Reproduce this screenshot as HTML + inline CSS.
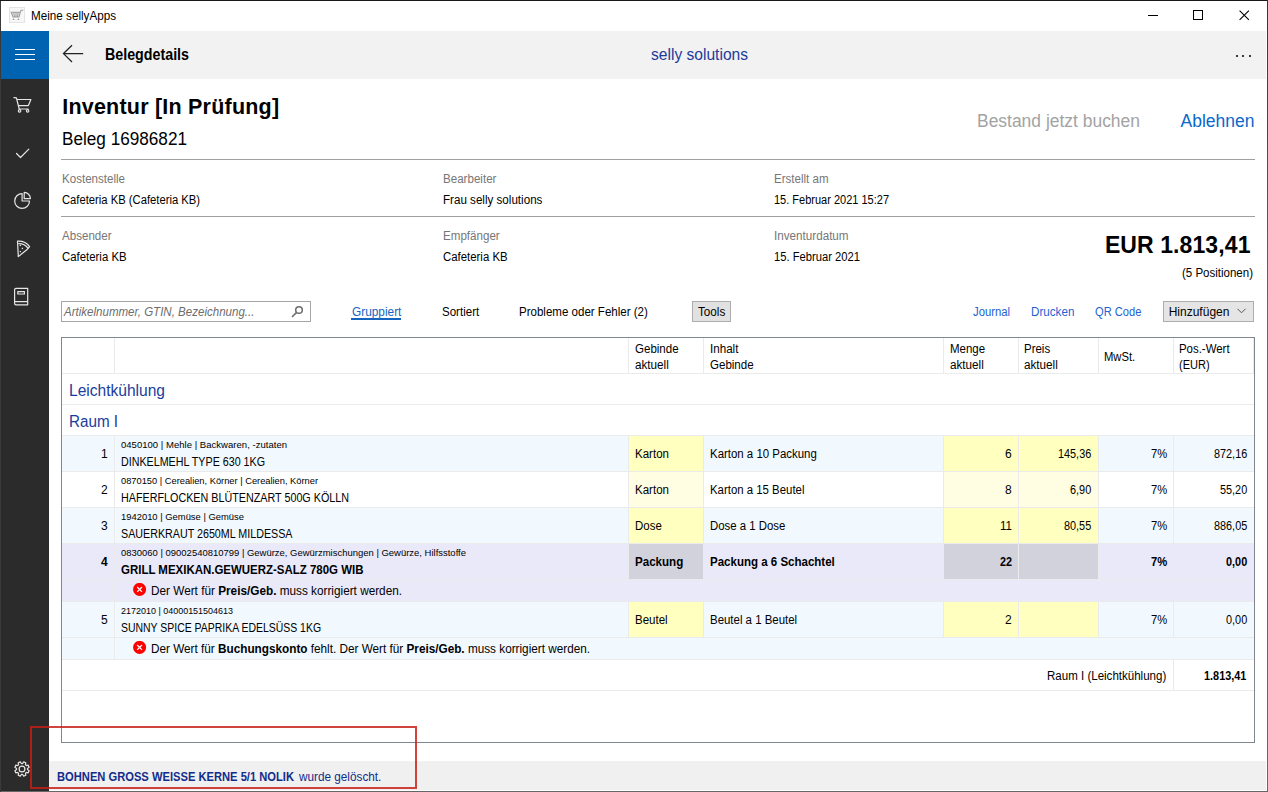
<!DOCTYPE html>
<html><head><meta charset="utf-8"><style>
html,body{margin:0;padding:0;width:1268px;height:792px;overflow:hidden;background:#fff}
body{position:relative;font-family:"Liberation Sans",sans-serif}
body>*{position:absolute}
.t{white-space:pre}
</style></head><body>
<div style="left:0px;top:0px;width:1268px;height:792px;background:#ffffff;"></div>
<span class="t" style="top:9px;font-size:12px;line-height:14px;color:#000;transform:scaleX(0.9730);transform-origin:0 0;left:30.50px;">Meine sellyApps</span>
<svg style="left:9px;top:7px" width="16" height="16" viewBox="0 0 16 16"><rect x="0.5" y="0.5" width="15" height="15" fill="#f7f7f7" stroke="#e4e4e4"/><path d="M2.3 5.2 L4 10 L10 10 L11.3 5.2 Z M4.6 5.2 L5.6 10 M7 5.2 L7 10 M9.2 5.2 L8.5 10 M11.3 5.2 L12.1 3.2 L14.2 3.2" fill="none" stroke="#9d9d9d" stroke-width="1.1"/><path d="M3.3 13 L4.5 11.3 L5.7 13 Z M8.2 13 L9.4 11.3 L10.6 13 Z" fill="#9d9d9d"/></svg>
<div style="left:1148px;top:15px;width:10px;height:1px;background:#000;"></div>
<div style="left:1193px;top:10px;width:8px;height:8px;border:1px solid #000"></div>
<svg style="left:1239px;top:10px" width="11" height="11" viewBox="0 0 11 11"><path d="M0.6 0.6 L9.9 9.9 M9.9 0.6 L0.6 9.9" stroke="#000" stroke-width="1.1"/></svg>
<div style="left:1px;top:31px;width:48px;height:760px;background:#2b2b2b;"></div>
<div style="left:1px;top:31px;width:48px;height:48px;background:#0063b1;"></div>
<div style="left:15px;top:49px;width:20px;height:1px;background:#fff;"></div>
<div style="left:15px;top:54px;width:20px;height:1px;background:#fff;"></div>
<div style="left:15px;top:59px;width:20px;height:1px;background:#fff;"></div>
<svg style="left:12px;top:95px" width="22" height="20" viewBox="0 0 22 20"><path d="M1.9 2.6 L4.4 2.8 L7.2 14 L16.2 14 M5.2 4.5 L18.9 4.5 L16.4 10.6 L6.6 10.6" fill="none" stroke="#e6e6e6" stroke-width="1.2" stroke-linejoin="round" stroke-linecap="round"/><circle cx="7.6" cy="15.9" r="1.2" fill="none" stroke="#e6e6e6" stroke-width="1.2" stroke-linejoin="round" stroke-linecap="round"/><circle cx="15.6" cy="15.9" r="1.2" fill="none" stroke="#e6e6e6" stroke-width="1.2" stroke-linejoin="round" stroke-linecap="round"/></svg>
<svg style="left:14px;top:145.5px" width="18" height="14" viewBox="0 0 18 14"><path d="M2.5 7.5 L6.5 11.5 L14.8 3.2" fill="none" stroke="#e6e6e6" stroke-width="1.2" stroke-linejoin="round" stroke-linecap="round"/></svg>
<svg style="left:12px;top:190px" width="22" height="22" viewBox="0 0 22 22"><path d="M10.1 3.6 A7.4 7.4 0 1 0 17.5 11 L10.1 11 Z" fill="none" stroke="#e6e6e6" stroke-width="1.2" stroke-linejoin="round" stroke-linecap="round"/><path d="M12.2 2.4 A6.2 6.2 0 0 1 18.4 8.6 L12.2 8.6 Z" fill="none" stroke="#e6e6e6" stroke-width="1.2" stroke-linejoin="round" stroke-linecap="round"/></svg>
<svg style="left:14px;top:238px" width="18" height="22" viewBox="0 0 18 22"><path d="M3.5 3.2 Q11.5 2.8 15.6 8.6 L12.8 11.8 L4.3 18.6 Z" fill="none" stroke="#e6e6e6" stroke-width="1.2" stroke-linejoin="round" stroke-linecap="round"/><path d="M4.8 5.6 Q10.8 5.6 14 10.2" fill="none" stroke="#e6e6e6" stroke-width="1.2" stroke-linejoin="round" stroke-linecap="round"/><path d="M6.3 6.5 L7.2 7.4 L6.3 8.3 L5.4 7.4 Z M8.4 9.5 L9.3 10.4 L8.4 11.3 L7.5 10.4 Z M6.3 12.7 L7.2 13.6 L6.3 14.5 L5.4 13.6 Z" fill="#e6e6e6"/></svg>
<svg style="left:12px;top:285px" width="18" height="22" viewBox="0 0 18 22"><path d="M4 3.4 L15.7 3.4 L15.7 19.8 L4 19.8 Q2.6 19.8 2.6 18.4 L2.6 4.8 Q2.6 3.4 4 3.4 Z M2.6 16.6 L15.7 16.6 M5.8 6.6 L12.4 6.6 L12.4 9 L5.8 9 Z" fill="none" stroke="#e6e6e6" stroke-width="1.2" stroke-linejoin="round" stroke-linecap="round"/></svg>
<svg style="left:12.4px;top:758.5px" width="20" height="20" viewBox="0 0 20 20"><path d="M10.62 4.54 L11.70 2.90 L13.81 3.78 L13.42 5.70 L14.30 6.58 L16.22 6.19 L17.10 8.30 L15.46 9.38 L15.46 10.62 L17.10 11.70 L16.22 13.81 L14.30 13.42 L13.42 14.30 L13.81 16.22 L11.70 17.10 L10.62 15.46 L9.38 15.46 L8.30 17.10 L6.19 16.22 L6.58 14.30 L5.70 13.42 L3.78 13.81 L2.90 11.70 L4.54 10.62 L4.54 9.38 L2.90 8.30 L3.78 6.19 L5.70 6.58 L6.58 5.70 L6.19 3.78 L8.30 2.90 L9.38 4.54 Z" fill="none" stroke="#e6e6e6" stroke-width="1.2" stroke-linejoin="round" stroke-linecap="round"/><circle cx="10" cy="10" r="2.9" fill="none" stroke="#e6e6e6" stroke-width="1.2" stroke-linejoin="round" stroke-linecap="round"/></svg>
<div style="left:49px;top:31px;width:1217px;height:48px;background:#f2f2f2;"></div>
<svg style="left:62px;top:44px" width="24" height="20" viewBox="0 0 24 20"><path d="M1.5 9.6 L21.2 9.6 M10 1.2 L1.5 9.6 L10 18" fill="none" stroke="#222" stroke-width="1.3"/></svg>
<span class="t" style="top:46px;font-size:16px;line-height:17px;color:#000;font-weight:bold;transform:scaleX(0.8913);transform-origin:0 0;left:105.00px;">Belegdetails</span>
<span class="t" style="top:46px;font-size:16px;line-height:17px;color:#1c3a9a;transform:scaleX(0.9739);transform-origin:0 0;left:651.40px;">selly solutions</span>
<div style="left:1236px;top:55px;width:2px;height:2px;background:#000;border-radius:1px;"></div>
<div style="left:1242px;top:55px;width:2px;height:2px;background:#000;border-radius:1px;"></div>
<div style="left:1249px;top:55px;width:2px;height:2px;background:#000;border-radius:1px;"></div>
<span class="t" style="top:95px;font-size:21.5px;line-height:24px;color:#000;font-weight:bold;letter-spacing:0.218px;left:62.20px;">Inventur [In Prüfung]</span>
<span class="t" style="top:129px;font-size:17.5px;line-height:20px;color:#000;transform:scaleX(0.9805);transform-origin:0 0;left:62.20px;">Beleg 16986821</span>
<span class="t" style="top:111px;font-size:17.5px;line-height:20px;color:#a3a3a3;transform:scaleX(0.9972);transform-origin:0 0;left:976.50px;">Bestand jetzt buchen</span>
<span class="t" style="top:111px;font-size:17.5px;line-height:20px;color:#0a68cc;letter-spacing:0.009px;left:1180.50px;">Ablehnen</span>
<div style="left:61px;top:159px;width:1194px;height:1px;background:#a0a0a0;"></div>
<span class="t" style="top:172px;font-size:12px;line-height:14px;color:#767676;transform:scaleX(0.9633);transform-origin:0 0;left:61.50px;">Kostenstelle</span>
<span class="t" style="top:172px;font-size:12px;line-height:14px;color:#767676;transform:scaleX(0.9656);transform-origin:0 0;left:442.60px;">Bearbeiter</span>
<span class="t" style="top:172px;font-size:12px;line-height:14px;color:#767676;transform:scaleX(0.9632);transform-origin:0 0;left:774.20px;">Erstellt am</span>
<span class="t" style="top:193px;font-size:12px;line-height:14px;color:#000;transform:scaleX(0.9361);transform-origin:0 0;left:61.50px;">Cafeteria KB (Cafeteria KB)</span>
<span class="t" style="top:193px;font-size:12px;line-height:14px;color:#000;transform:scaleX(0.9677);transform-origin:0 0;left:442.60px;">Frau selly solutions</span>
<span class="t" style="top:193px;font-size:12px;line-height:14px;color:#000;transform:scaleX(0.9171);transform-origin:0 0;left:774.20px;">15. Februar 2021 15:27</span>
<div style="left:61px;top:216px;width:1194px;height:1px;background:#a0a0a0;"></div>
<span class="t" style="top:229px;font-size:12px;line-height:14px;color:#767676;transform:scaleX(0.9649);transform-origin:0 0;left:61.50px;">Absender</span>
<span class="t" style="top:229px;font-size:12px;line-height:14px;color:#767676;transform:scaleX(0.9661);transform-origin:0 0;left:442.60px;">Empfänger</span>
<span class="t" style="top:229px;font-size:12px;line-height:14px;color:#767676;transform:scaleX(0.9722);transform-origin:0 0;left:774.20px;">Inventurdatum</span>
<span class="t" style="top:250px;font-size:12px;line-height:14px;color:#000;transform:scaleX(0.9492);transform-origin:0 0;left:61.50px;">Cafeteria KB</span>
<span class="t" style="top:250px;font-size:12px;line-height:14px;color:#000;transform:scaleX(0.9492);transform-origin:0 0;left:442.60px;">Cafeteria KB</span>
<span class="t" style="top:250px;font-size:12px;line-height:14px;color:#000;transform:scaleX(0.9330);transform-origin:0 0;left:774.20px;">15. Februar 2021</span>
<span class="t" style="top:232px;font-size:23px;line-height:26px;color:#000;font-weight:bold;letter-spacing:0.096px;left:1104.90px;">EUR 1.813,41</span>
<span class="t" style="top:266px;font-size:12px;line-height:14px;color:#000;transform:scaleX(0.9589);transform-origin:0 0;left:1182.30px;">(5 Positionen)</span>
<div style="left:61px;top:301px;width:248px;height:19px;border:1px solid #a6a6a6;background:#fff"></div>
<span class="t" style="top:305px;font-size:12px;line-height:14px;color:#6d6d6d;font-style:italic;transform:scaleX(0.9614);transform-origin:0 0;left:64.18px;">Artikelnummer, GTIN, Bezeichnung...</span>
<svg style="left:290px;top:304px" width="14" height="16" viewBox="0 0 14 16"><circle cx="9" cy="6" r="3.3" fill="none" stroke="#6d6d6d" stroke-width="1.5"/><path d="M6.6 8.4 L2 13" stroke="#6d6d6d" stroke-width="1.6"/></svg>
<span class="t" style="top:305px;font-size:12px;line-height:14px;color:#1565c0;transform:scaleX(0.9872);transform-origin:0 0;left:351.60px;">Gruppiert</span>
<div style="left:351px;top:318px;width:50px;height:2px;background:#1565c0;"></div>
<span class="t" style="top:305px;font-size:12px;line-height:14px;color:#000;transform:scaleX(0.9612);transform-origin:0 0;left:441.60px;">Sortiert</span>
<span class="t" style="top:305px;font-size:12px;line-height:14px;color:#000;transform:scaleX(0.9609);transform-origin:0 0;left:519.40px;">Probleme oder Fehler (2)</span>
<div style="left:692px;top:301px;width:37px;height:19px;border:1px solid #adadad;background:#e1e1e1"></div>
<span class="t" style="top:305px;font-size:12px;line-height:14px;color:#000;transform:scaleX(0.9743);transform-origin:0 0;left:697.70px;">Tools</span>
<span class="t" style="top:305px;font-size:12px;line-height:14px;color:#1f63d0;transform:scaleX(0.9426);transform-origin:0 0;left:973.40px;">Journal</span>
<span class="t" style="top:305px;font-size:12px;line-height:14px;color:#1f63d0;transform:scaleX(0.9709);transform-origin:0 0;left:1031.20px;">Drucken</span>
<span class="t" style="top:305px;font-size:12px;line-height:14px;color:#1f63d0;transform:scaleX(0.9273);transform-origin:0 0;left:1095.30px;">QR Code</span>
<div style="left:1163px;top:301px;width:89px;height:19px;border:1px solid #adadad;background:#e5e5e5"></div>
<span class="t" style="top:305px;font-size:12px;line-height:14px;color:#000;left:1168.70px;">Hinzufügen</span>
<svg style="left:1236px;top:307px" width="12" height="8" viewBox="0 0 12 8"><path d="M1.5 1.8 L5.5 5.8 L9.5 1.8" fill="none" stroke="#555" stroke-width="1"/></svg>
<div style="left:61px;top:337px;width:1192px;height:404px;border:1px solid #7f8591;background:#fff"></div>
<div style="left:114px;top:338px;width:1px;height:35px;background:#ebebeb;"></div>
<div style="left:628px;top:338px;width:1px;height:35px;background:#ebebeb;"></div>
<div style="left:703px;top:338px;width:1px;height:35px;background:#ebebeb;"></div>
<div style="left:943px;top:338px;width:1px;height:35px;background:#ebebeb;"></div>
<div style="left:1018px;top:338px;width:1px;height:35px;background:#ebebeb;"></div>
<div style="left:1098px;top:338px;width:1px;height:35px;background:#ebebeb;"></div>
<div style="left:1173px;top:338px;width:1px;height:35px;background:#ebebeb;"></div>
<div style="left:1253px;top:338px;width:1px;height:35px;background:#ebebeb;"></div>
<div style="left:62px;top:373px;width:1192px;height:1px;background:#ebebeb;"></div>
<span class="t" style="top:342px;font-size:12px;line-height:14px;color:#000;transform:scaleX(0.9616);transform-origin:0 0;left:634.50px;">Gebinde</span>
<span class="t" style="top:358px;font-size:12px;line-height:14px;color:#000;transform:scaleX(0.9750);transform-origin:0 0;left:634.50px;">aktuell</span>
<span class="t" style="top:342px;font-size:12px;line-height:14px;color:#000;transform:scaleX(0.9676);transform-origin:0 0;left:709.60px;">Inhalt</span>
<span class="t" style="top:358px;font-size:12px;line-height:14px;color:#000;transform:scaleX(0.9616);transform-origin:0 0;left:709.60px;">Gebinde</span>
<span class="t" style="top:342px;font-size:12px;line-height:14px;color:#000;transform:scaleX(0.9573);transform-origin:0 0;left:949.80px;">Menge</span>
<span class="t" style="top:358px;font-size:12px;line-height:14px;color:#000;transform:scaleX(0.9750);transform-origin:0 0;left:949.80px;">aktuell</span>
<span class="t" style="top:342px;font-size:12px;line-height:14px;color:#000;transform:scaleX(0.9560);transform-origin:0 0;left:1024.00px;">Preis</span>
<span class="t" style="top:358px;font-size:12px;line-height:14px;color:#000;transform:scaleX(0.9750);transform-origin:0 0;left:1024.00px;">aktuell</span>
<span class="t" style="top:342px;font-size:12px;line-height:14px;color:#000;transform:scaleX(0.9519);transform-origin:0 0;left:1179.00px;">Pos.-Wert</span>
<span class="t" style="top:358px;font-size:12px;line-height:14px;color:#000;transform:scaleX(0.9196);transform-origin:0 0;left:1179.00px;">(EUR)</span>
<span class="t" style="top:350px;font-size:12px;line-height:14px;color:#000;transform:scaleX(0.9374);transform-origin:0 0;left:1104.00px;">MwSt.</span>
<span class="t" style="top:382px;font-size:16px;line-height:17px;color:#1a3c9c;transform:scaleX(0.9724);transform-origin:0 0;left:69.20px;">Leichtkühlung</span>
<div style="left:62px;top:404px;width:1192px;height:1px;background:#ebebeb;"></div>
<span class="t" style="top:413px;font-size:16px;line-height:17px;color:#1a3c9c;transform:scaleX(0.9510);transform-origin:0 0;left:69.20px;">Raum I</span>
<div style="left:62px;top:435px;width:1192px;height:1px;background:#ebebeb;"></div>
<div style="left:62px;top:436px;width:1192px;height:35px;background:#f1f8fe;"></div>
<div style="left:629px;top:436px;width:74px;height:35px;background:#ffffc0;"></div>
<div style="left:944px;top:436px;width:74px;height:35px;background:#ffffc0;"></div>
<div style="left:1019px;top:436px;width:79px;height:35px;background:#ffffc0;"></div>
<div style="left:114px;top:436px;width:1px;height:35px;background:#ebebeb;"></div>
<div style="left:628px;top:436px;width:1px;height:35px;background:#ebebeb;"></div>
<div style="left:703px;top:436px;width:1px;height:35px;background:#ebebeb;"></div>
<div style="left:943px;top:436px;width:1px;height:35px;background:#ebebeb;"></div>
<div style="left:1018px;top:436px;width:1px;height:35px;background:#ebebeb;"></div>
<div style="left:1098px;top:436px;width:1px;height:35px;background:#ebebeb;"></div>
<div style="left:1173px;top:436px;width:1px;height:35px;background:#ebebeb;"></div>
<div style="left:62px;top:471px;width:1192px;height:1px;background:#ebebeb;"></div>
<span class="t" style="top:447px;font-size:12px;line-height:14px;color:#000;left:100.94px;">1</span>
<span class="t" style="top:439px;font-size:9.5px;line-height:11px;color:#000;letter-spacing:0.029px;left:121.00px;">0450100 | Mehle | Backwaren, -zutaten</span>
<span class="t" style="top:455px;font-size:12px;line-height:14px;color:#000;transform:scaleX(0.8922);transform-origin:0 0;left:121.00px;">DINKELMEHL TYPE 630 1KG</span>
<span class="t" style="top:447px;font-size:12px;line-height:14px;color:#000;transform:scaleX(0.9603);transform-origin:0 0;left:634.80px;">Karton</span>
<span class="t" style="top:447px;font-size:12px;line-height:14px;color:#000;transform:scaleX(0.9528);transform-origin:0 0;left:710.20px;">Karton a 10 Packung</span>
<span class="t" style="top:447px;font-size:12px;line-height:14px;color:#000;left:1005.04px;">6</span>
<span class="t" style="top:447px;font-size:12px;line-height:14px;color:#000;transform:scaleX(0.9045);transform-origin:0 0;left:1058.39px;">145,36</span>
<span class="t" style="top:447px;font-size:12px;line-height:14px;color:#000;transform:scaleX(0.9308);transform-origin:0 0;left:1150.86px;">7%</span>
<span class="t" style="top:447px;font-size:12px;line-height:14px;color:#000;transform:scaleX(0.9045);transform-origin:0 0;left:1213.79px;">872,16</span>
<div style="left:62px;top:472px;width:1192px;height:35px;background:#ffffff;"></div>
<div style="left:629px;top:472px;width:74px;height:35px;background:#fffde2;"></div>
<div style="left:944px;top:472px;width:74px;height:35px;background:#fffde2;"></div>
<div style="left:1019px;top:472px;width:79px;height:35px;background:#fffde2;"></div>
<div style="left:114px;top:472px;width:1px;height:35px;background:#ebebeb;"></div>
<div style="left:628px;top:472px;width:1px;height:35px;background:#ebebeb;"></div>
<div style="left:703px;top:472px;width:1px;height:35px;background:#ebebeb;"></div>
<div style="left:943px;top:472px;width:1px;height:35px;background:#ebebeb;"></div>
<div style="left:1018px;top:472px;width:1px;height:35px;background:#ebebeb;"></div>
<div style="left:1098px;top:472px;width:1px;height:35px;background:#ebebeb;"></div>
<div style="left:1173px;top:472px;width:1px;height:35px;background:#ebebeb;"></div>
<div style="left:62px;top:507px;width:1192px;height:1px;background:#ebebeb;"></div>
<span class="t" style="top:483px;font-size:12px;line-height:14px;color:#000;left:100.94px;">2</span>
<span class="t" style="top:475px;font-size:9.5px;line-height:11px;color:#000;transform:scaleX(0.9782);transform-origin:0 0;left:121.00px;">0870150 | Cerealien, Körner | Cerealien, Körner</span>
<span class="t" style="top:491px;font-size:12px;line-height:14px;color:#000;transform:scaleX(0.8966);transform-origin:0 0;left:121.00px;">HAFERFLOCKEN BLÜTENZART 500G KÖLLN</span>
<span class="t" style="top:483px;font-size:12px;line-height:14px;color:#000;transform:scaleX(0.9603);transform-origin:0 0;left:634.80px;">Karton</span>
<span class="t" style="top:483px;font-size:12px;line-height:14px;color:#000;transform:scaleX(0.9499);transform-origin:0 0;left:710.20px;">Karton a 15 Beutel</span>
<span class="t" style="top:483px;font-size:12px;line-height:14px;color:#000;left:1005.04px;">8</span>
<span class="t" style="top:483px;font-size:12px;line-height:14px;color:#000;transform:scaleX(0.9071);transform-origin:0 0;left:1070.43px;">6,90</span>
<span class="t" style="top:483px;font-size:12px;line-height:14px;color:#000;transform:scaleX(0.9308);transform-origin:0 0;left:1150.86px;">7%</span>
<span class="t" style="top:483px;font-size:12px;line-height:14px;color:#000;transform:scaleX(0.9056);transform-origin:0 0;left:1219.78px;">55,20</span>
<div style="left:62px;top:508px;width:1192px;height:35px;background:#f1f8fe;"></div>
<div style="left:629px;top:508px;width:74px;height:35px;background:#ffffc0;"></div>
<div style="left:944px;top:508px;width:74px;height:35px;background:#ffffc0;"></div>
<div style="left:1019px;top:508px;width:79px;height:35px;background:#ffffc0;"></div>
<div style="left:114px;top:508px;width:1px;height:35px;background:#ebebeb;"></div>
<div style="left:628px;top:508px;width:1px;height:35px;background:#ebebeb;"></div>
<div style="left:703px;top:508px;width:1px;height:35px;background:#ebebeb;"></div>
<div style="left:943px;top:508px;width:1px;height:35px;background:#ebebeb;"></div>
<div style="left:1018px;top:508px;width:1px;height:35px;background:#ebebeb;"></div>
<div style="left:1098px;top:508px;width:1px;height:35px;background:#ebebeb;"></div>
<div style="left:1173px;top:508px;width:1px;height:35px;background:#ebebeb;"></div>
<div style="left:62px;top:543px;width:1192px;height:1px;background:#ebebeb;"></div>
<span class="t" style="top:519px;font-size:12px;line-height:14px;color:#000;left:100.94px;">3</span>
<span class="t" style="top:511px;font-size:9.5px;line-height:11px;color:#000;transform:scaleX(0.9895);transform-origin:0 0;left:121.00px;">1942010 | Gemüse | Gemüse</span>
<span class="t" style="top:527px;font-size:12px;line-height:14px;color:#000;transform:scaleX(0.8927);transform-origin:0 0;left:121.00px;">SAUERKRAUT 2650ML MILDESSA</span>
<span class="t" style="top:519px;font-size:12px;line-height:14px;color:#000;transform:scaleX(0.9549);transform-origin:0 0;left:634.80px;">Dose</span>
<span class="t" style="top:519px;font-size:12px;line-height:14px;color:#000;transform:scaleX(0.9488);transform-origin:0 0;left:710.20px;">Dose a 1 Dose</span>
<span class="t" style="top:519px;font-size:12px;line-height:14px;color:#000;transform:scaleX(0.9643);transform-origin:0 0;left:999.66px;">11</span>
<span class="t" style="top:519px;font-size:12px;line-height:14px;color:#000;transform:scaleX(0.9056);transform-origin:0 0;left:1064.38px;">80,55</span>
<span class="t" style="top:519px;font-size:12px;line-height:14px;color:#000;transform:scaleX(0.9308);transform-origin:0 0;left:1150.86px;">7%</span>
<span class="t" style="top:519px;font-size:12px;line-height:14px;color:#000;transform:scaleX(0.9045);transform-origin:0 0;left:1213.79px;">886,05</span>
<div style="left:62px;top:544px;width:1192px;height:35px;background:#e9e9fa;"></div>
<div style="left:629px;top:544px;width:74px;height:35px;background:#d2d2dc;"></div>
<div style="left:944px;top:544px;width:74px;height:35px;background:#d2d2dc;"></div>
<div style="left:1019px;top:544px;width:79px;height:35px;background:#d2d2dc;"></div>
<div style="left:114px;top:544px;width:1px;height:35px;background:#ebebeb;"></div>
<div style="left:628px;top:544px;width:1px;height:35px;background:#ebebeb;"></div>
<div style="left:703px;top:544px;width:1px;height:35px;background:#ebebeb;"></div>
<div style="left:943px;top:544px;width:1px;height:35px;background:#ebebeb;"></div>
<div style="left:1018px;top:544px;width:1px;height:35px;background:#ebebeb;"></div>
<div style="left:1098px;top:544px;width:1px;height:35px;background:#ebebeb;"></div>
<div style="left:1173px;top:544px;width:1px;height:35px;background:#ebebeb;"></div>
<div style="left:62px;top:579px;width:1192px;height:1px;background:#ebebeb;"></div>
<span class="t" style="top:555px;font-size:12px;line-height:14px;color:#000;font-weight:bold;left:100.94px;">4</span>
<span class="t" style="top:547px;font-size:9.5px;line-height:11px;color:#000;transform:scaleX(0.9963);transform-origin:0 0;left:121.00px;">0830060 | 09002540810799 | Gewürze, Gewürzmischungen | Gewürze, Hilfsstoffe</span>
<span class="t" style="top:563px;font-size:12px;line-height:14px;color:#000;font-weight:bold;transform:scaleX(0.9555);transform-origin:0 0;left:121.00px;">GRILL MEXIKAN.GEWUERZ-SALZ 780G WIB</span>
<span class="t" style="top:555px;font-size:12px;line-height:14px;color:#000;font-weight:bold;transform:scaleX(0.9646);transform-origin:0 0;left:634.80px;">Packung</span>
<span class="t" style="top:555px;font-size:12px;line-height:14px;color:#000;font-weight:bold;transform:scaleX(0.9597);transform-origin:0 0;left:710.20px;">Packung a 6 Schachtel</span>
<span class="t" style="top:555px;font-size:12px;line-height:14px;color:#000;font-weight:bold;transform:scaleX(0.9000);transform-origin:0 0;left:999.71px;">22</span>
<span class="t" style="top:555px;font-size:12px;line-height:14px;color:#000;font-weight:bold;transform:scaleX(0.9308);transform-origin:0 0;left:1150.86px;">7%</span>
<span class="t" style="top:555px;font-size:12px;line-height:14px;color:#000;font-weight:bold;transform:scaleX(0.9071);transform-origin:0 0;left:1225.83px;">0,00</span>
<div style="left:62px;top:580px;width:1192px;height:21px;background:#e9e9fa;"></div>
<div style="left:114px;top:580px;width:1px;height:21px;background:#ebebeb;"></div>
<div style="left:62px;top:601px;width:1192px;height:1px;background:#ebebeb;"></div>
<svg style="left:133px;top:583px" width="14" height="14" viewBox="0 0 14 14"><circle cx="6.6" cy="6.4" r="6.5" fill="#f00"/><path d="M4.2 4 L9 8.8 M9 4 L4.2 8.8" stroke="#fff" stroke-width="1.2"/></svg>
<span class="t" style="left:150.90px;top:584px;font-size:12px;line-height:14px;color:#000;transform:scaleX(0.9810);transform-origin:0 0"><span>Der Wert für </span><span style="font-weight:bold">Preis/Geb.</span><span> muss korrigiert werden.</span></span>
<div style="left:62px;top:602px;width:1192px;height:35px;background:#f1f8fe;"></div>
<div style="left:629px;top:602px;width:74px;height:35px;background:#ffffc0;"></div>
<div style="left:944px;top:602px;width:74px;height:35px;background:#ffffc0;"></div>
<div style="left:1019px;top:602px;width:79px;height:35px;background:#ffffc0;"></div>
<div style="left:114px;top:602px;width:1px;height:35px;background:#ebebeb;"></div>
<div style="left:628px;top:602px;width:1px;height:35px;background:#ebebeb;"></div>
<div style="left:703px;top:602px;width:1px;height:35px;background:#ebebeb;"></div>
<div style="left:943px;top:602px;width:1px;height:35px;background:#ebebeb;"></div>
<div style="left:1018px;top:602px;width:1px;height:35px;background:#ebebeb;"></div>
<div style="left:1098px;top:602px;width:1px;height:35px;background:#ebebeb;"></div>
<div style="left:1173px;top:602px;width:1px;height:35px;background:#ebebeb;"></div>
<div style="left:62px;top:637px;width:1192px;height:1px;background:#ebebeb;"></div>
<span class="t" style="top:613px;font-size:12px;line-height:14px;color:#000;left:100.94px;">5</span>
<span class="t" style="top:605px;font-size:9.5px;line-height:11px;color:#000;transform:scaleX(0.9435);transform-origin:0 0;left:121.00px;">2172010 | 04000151504613</span>
<span class="t" style="top:621px;font-size:12px;line-height:14px;color:#000;transform:scaleX(0.8710);transform-origin:0 0;left:121.00px;">SUNNY SPICE PAPRIKA EDELSÜSS 1KG</span>
<span class="t" style="top:613px;font-size:12px;line-height:14px;color:#000;transform:scaleX(0.9597);transform-origin:0 0;left:634.80px;">Beutel</span>
<span class="t" style="top:613px;font-size:12px;line-height:14px;color:#000;transform:scaleX(0.9532);transform-origin:0 0;left:710.20px;">Beutel a 1 Beutel</span>
<span class="t" style="top:613px;font-size:12px;line-height:14px;color:#000;left:1005.04px;">2</span>
<span class="t" style="top:613px;font-size:12px;line-height:14px;color:#000;transform:scaleX(0.9308);transform-origin:0 0;left:1150.86px;">7%</span>
<span class="t" style="top:613px;font-size:12px;line-height:14px;color:#000;transform:scaleX(0.9071);transform-origin:0 0;left:1225.83px;">0,00</span>
<div style="left:62px;top:638px;width:1192px;height:21px;background:#f1f8fe;"></div>
<div style="left:114px;top:638px;width:1px;height:21px;background:#ebebeb;"></div>
<div style="left:62px;top:659px;width:1192px;height:1px;background:#ebebeb;"></div>
<svg style="left:133px;top:641px" width="14" height="14" viewBox="0 0 14 14"><circle cx="6.6" cy="6.4" r="6.5" fill="#f00"/><path d="M4.2 4 L9 8.8 M9 4 L4.2 8.8" stroke="#fff" stroke-width="1.2"/></svg>
<span class="t" style="left:150.90px;top:642px;font-size:12px;line-height:14px;color:#000;transform:scaleX(0.9792);transform-origin:0 0"><span>Der Wert für </span><span style="font-weight:bold">Buchungskonto</span><span> fehlt. Der Wert für </span><span style="font-weight:bold">Preis/Geb.</span><span> muss korrigiert werden.</span></span>
<div style="left:1173px;top:660px;width:1px;height:30px;background:#ebebeb;"></div>
<div style="left:62px;top:690px;width:1192px;height:1px;background:#ebebeb;"></div>
<span class="t" style="top:669px;font-size:12px;line-height:14px;color:#000;transform:scaleX(0.9612);transform-origin:0 0;left:1047.04px;">Raum I (Leichtkühlung)</span>
<span class="t" style="top:669px;font-size:12px;line-height:14px;color:#000;font-weight:bold;transform:scaleX(0.9071);transform-origin:0 0;left:1204.10px;">1.813,41</span>
<div style="left:49px;top:761px;width:1217px;height:29px;background:#f0f0f0;"></div>
<span class="t" style="top:770px;font-size:12px;line-height:14px;color:#122c8c;font-weight:bold;transform:scaleX(0.9305);transform-origin:0 0;left:57.00px;">BOHNEN GROSS WEISSE KERNE 5/1 NOLIK</span>
<span class="t" style="top:770px;font-size:12px;line-height:14px;color:#122c8c;transform:scaleX(0.9796);transform-origin:0 0;left:298.66px;">wurde gelöscht.</span>
<div style="left:30px;top:726px;width:383px;height:59px;border:2px solid rgba(200,30,20,0.83)"></div>
<div style="left:0px;top:0px;width:1268px;height:1px;background:#181818;"></div>
<div style="left:0px;top:1px;width:1px;height:791px;background:#3a3a3a;"></div>
<div style="left:1266px;top:1px;width:1px;height:790px;background:#ffffff;"></div>
<div style="left:1267px;top:0px;width:1px;height:792px;background:#555;background:linear-gradient(#333,#666 40%,#666);"></div>
<div style="left:49px;top:790px;width:1217px;height:1px;background:#ffffff;"></div>
<div style="left:0px;top:791px;width:1268px;height:1px;background:#666666;"></div>
<div style="left:0px;top:790px;width:1px;height:2px;background:#3a3a3a;"></div>
</body></html>
